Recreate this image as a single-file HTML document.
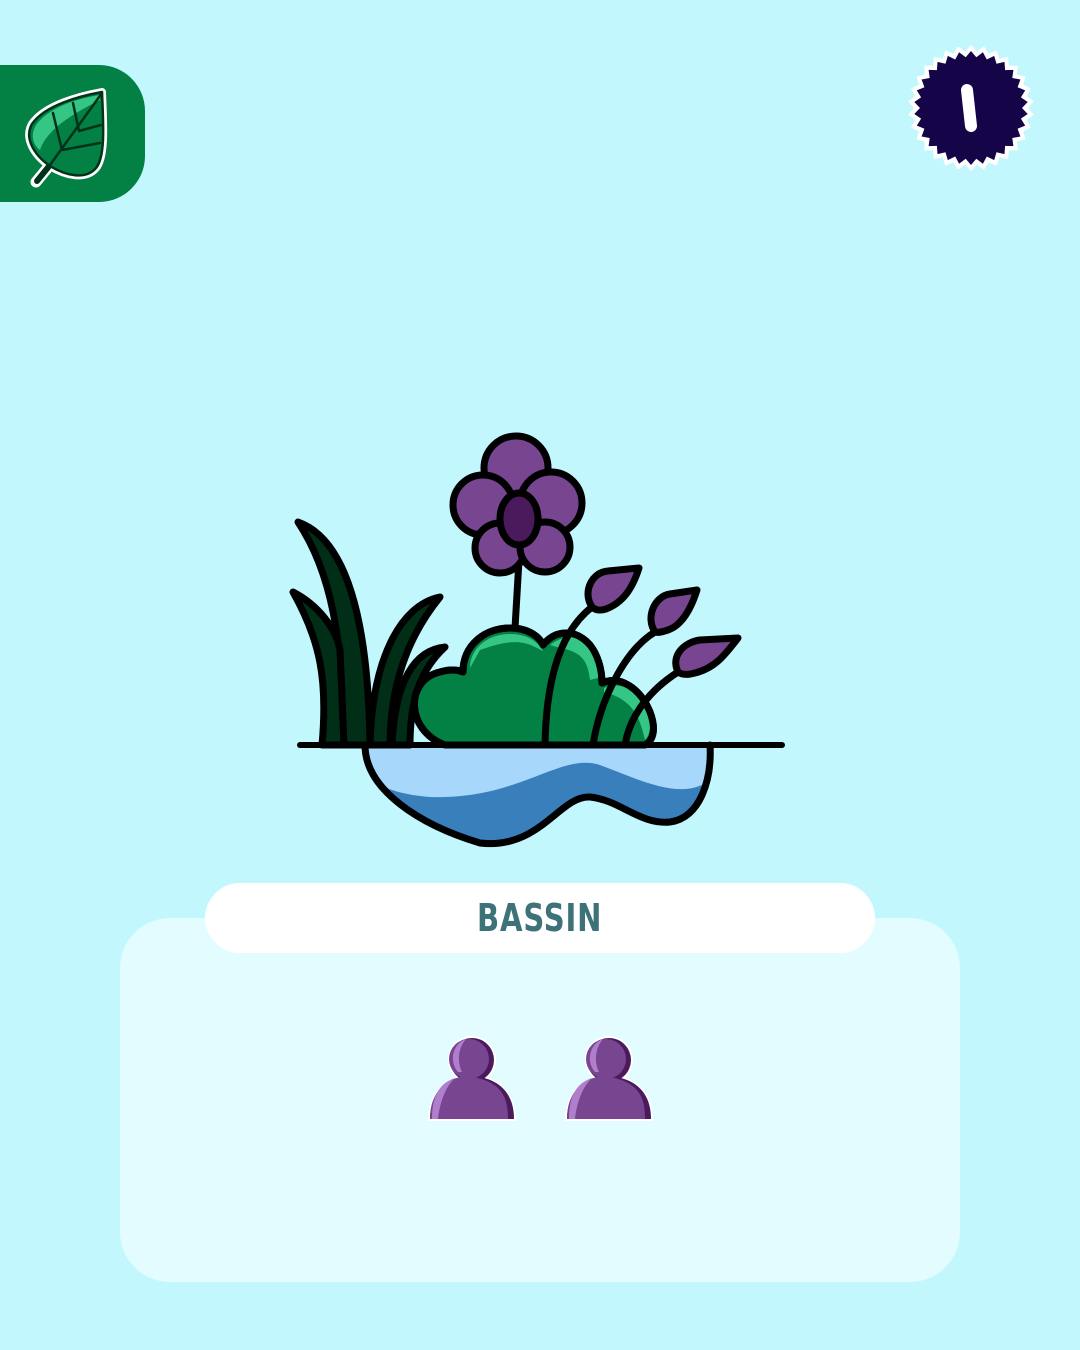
<!DOCTYPE html>
<html><head><meta charset="utf-8"><style>
html,body{margin:0;padding:0}
body{width:1080px;height:1350px;background:#c2f7fd;position:relative;overflow:hidden;font-family:"Liberation Sans",sans-serif}
.tile{position:absolute;left:0;top:65px;width:145px;height:137px;background:#038044;border-radius:0 46px 46px 0}
.panel{position:absolute;left:120px;top:918px;width:840px;height:364px;background:#e2fcff;border-radius:50px}
.pill{position:absolute;left:205px;top:883px;width:670px;height:70px;background:#fff;border-radius:35px;text-align:center;line-height:70px;font-size:38px;font-weight:bold;color:#3d7279;letter-spacing:1px;font-family:"DejaVu Sans Condensed","Liberation Sans",sans-serif}
svg{position:absolute;left:0;top:0}
</style></head><body>
<div class="tile"></div>
<div class="panel"></div>
<div class="pill"><span style="display:inline-block;transform:scaleX(0.85)">BASSIN</span></div>
<svg width="1080" height="1350" viewBox="0 0 1080 1350">
<g stroke-linejoin="round" stroke-linecap="round">
<path d="M50,165 L36,182" stroke="#fff" stroke-width="11"/>
<path d="M102,92 C80,96 45,105 32,124 C24,138 34,155 50,166 C66,176 86,180 96,168 C106,156 103,120 102,92 Z" fill="#fff" stroke="#fff" stroke-width="8"/>
<path d="M50,165 L37,181" stroke="#00321a" stroke-width="6"/>
<path d="M102,92 C80,96 45,105 32,124 C24,138 34,155 50,166 C66,176 86,180 96,168 C106,156 103,120 102,92 Z" fill="#038044" stroke="#00321a" stroke-width="2.5"/>
<path d="M100,95 C80,98 50,106 36,125 C30,135 33,145 40,150 C45,135 60,120 100,100 Z" fill="#35c685"/>
<path d="M102,93 L50,165 M53,113 L62,150 M73,103 L79,131 M79,131 L101,125 M62,150 L100,143" stroke="#00321a" stroke-width="2.5" fill="none"/>
</g>
<polygon id="burst" fill="#fff" points=""/>
<polygon id="burst2" fill="#150548" points=""/>
<path d="M967,90 L971,126" stroke="#fff" stroke-width="12" stroke-linecap="round"/>
<g stroke="#000" stroke-width="7" stroke-linejoin="round" stroke-linecap="round">
<path d="M365,745 C365,790 420,825 480,843 C540,850 560,795 590,797 C620,800 640,825 670,822 C700,818 712,780 710,745 Z" fill="#397fbb" stroke="none"/>
<path d="M365,745 L710,745 L707,782 C680,800 640,780 600,765 C560,752 520,800 430,797 C405,795 390,790 380,785 C368,770 365,758 365,745 Z" fill="#a7d8fc" stroke="none"/>
<path d="M365,745 C365,790 420,825 480,843 C540,850 560,795 590,797 C620,800 640,825 670,822 C700,818 712,780 710,745" fill="none"/>
<path d="M298,522 C335,535 368,590 370,745 L342,745 C345,640 330,570 298,522 Z" fill="#002e17"/>
<path d="M293,592 C318,605 336,628 340,650 L344,745 L322,745 C328,680 320,640 293,592 Z" fill="#002e17"/>
<path d="M440,597 C400,605 372,660 370,745 L390,745 C390,690 405,640 440,597 Z" fill="#002e17"/>
<path d="M445,647 C415,650 395,680 392,745 L410,745 C410,700 420,670 445,647 Z" fill="#002e17"/>
<path d="M519,560 L515,628" fill="none"/>
<path d="M445,745 C405,730 405,680 440,672 C450,669 458,670 463,672 C463,645 485,628 510,628 C530,628 540,638 543,645 C555,630 575,628 590,645 C598,655 602,670 602,683 C620,675 640,688 650,712 C656,728 654,740 645,745 Z" fill="#038044"/>
<path d="M470,668 C470,648 488,634 510,634 C528,634 538,642 543,651 C530,645 520,635 480,650 Z" fill="#35c685" stroke="none"/>
<path d="M550,645 C565,633 585,635 594,652 C598,662 598,672 598,678 L590,680 C588,665 585,652 560,648 Z" fill="#35c685" stroke="none"/>
<path d="M604,688 C622,680 640,692 648,712 C652,725 650,735 645,740 C640,720 635,700 604,692 Z" fill="#35c685" stroke="none"/>
<path d="M445,745 C405,730 405,680 440,672 C450,669 458,670 463,672 C463,645 485,628 510,628 C530,628 540,638 543,645 C555,630 575,628 590,645 C598,655 602,670 602,683 C620,675 640,688 650,712 C656,728 654,740 645,745" fill="none"/>
<path d="M545,745 C546,690 556,635 592,607" fill="none"/>
<path d="M593,745 C600,700 625,650 655,632" fill="none"/>
<path d="M625,745 C630,715 650,690 678,672" fill="none"/>
<path d="M592,607 C582,592 592,572 608,571 L639,568 C632,590 622,603 606,609 C600,611 595,610 592,607 Z" fill="#784590"/>
<path d="M655,632 C645,617 655,596 670,594 L697,590 C690,612 680,626 668,630 C662,632 658,633 655,632 Z" fill="#784590"/>
<path d="M678,672 C670,655 685,642 700,640 L738,638 C725,655 715,668 695,673 C688,675 682,675 678,672 Z" fill="#784590"/>
<circle cx="516" cy="468" r="32" fill="#784590"/>
<circle cx="483" cy="505" r="30" fill="#784590"/>
<circle cx="551" cy="503" r="31" fill="#784590"/>
<circle cx="500" cy="548" r="25" fill="#784590"/>
<circle cx="545" cy="547" r="25" fill="#784590"/>
<ellipse cx="519" cy="519" rx="19" ry="26" fill="#4a1a5c"/>
<path d="M300,745 L782,745" stroke-width="6"/>
</g>
<g id="p1">
<circle cx="472" cy="1060" r="24" fill="#fff"/>
<path d="M428,1121 C428,1092 445,1077 472,1074 C499,1077 516,1092 516,1121 Z" fill="#fff"/>
<path d="M430,1119 C430,1092 446,1078 472,1076 C498,1078 514,1092 514,1119 Z" fill="#4a1a5c"/>
<circle cx="472" cy="1060" r="22" fill="#4a1a5c"/>
<path d="M430,1119 C430,1092 446,1078 466,1076 C500,1080 508,1095 508,1119 Z" fill="#784590"/>
<circle cx="469" cy="1059" r="20" fill="#784590"/>
<path d="M432,1119 C432,1095 440,1083 455,1078 C447,1085 440,1100 438,1119 Z" fill="#b07fcc"/>
<path d="M458,1072 C449,1062 452,1044 466,1039 C458,1048 457,1062 462,1072 Z" fill="#b07fcc"/>
</g>
<use href="#p1" x="137" y="0"/>
</svg>
<script>
function burst(id,r1,r2,n){var p=[];for(var i=0;i<2*n;i++){var r=i%2?r2:r1,a=Math.PI*i/n;p.push((971+r*Math.sin(a)).toFixed(1)+","+(108-r*Math.cos(a)).toFixed(1));}document.getElementById(id).setAttribute("points",p.join(" "));}
burst("burst",63,57,30);burst("burst2",57,51,30);
</script>
</body></html>
